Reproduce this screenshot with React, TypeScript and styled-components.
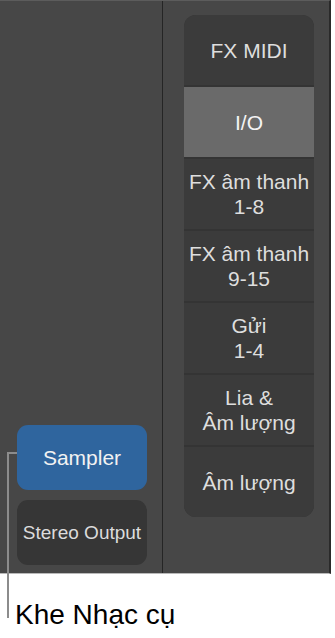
import React from "react";
import styled, { createGlobalStyle } from "styled-components";

const Global = createGlobalStyle`
  html, body { margin: 0; padding: 0; background: #ffffff; }
  body { font-family: "Liberation Sans", Arial, sans-serif; }
`;

const Page = styled.div`
  position: relative;
  width: 335px;
  height: 638px;
  background: #ffffff;
`;

const Panel = styled.div`
  display: flex;
  width: 329px;
  height: 572px;
  background: #474747;
  border-top: 1px solid #5c5c5c;
  border-bottom: 1px solid #b9b9b9;
  border-right: 2px solid #2a2a2a;
`;

const LeftColumn = styled.div`
  width: 163px;
  display: flex;
  flex-direction: column;
  justify-content: flex-end;
  align-items: flex-start;
  gap: 10px;
  padding: 0 0 8px 17px;
  box-sizing: border-box;
  border-right: 1px solid #252525;
`;

const Slot = styled.div<{ $active?: boolean; $size: number }>`
  width: 130px;
  height: 65px;
  border-radius: 11px;
  display: flex;
  align-items: center;
  justify-content: center;
  background: ${(p) => (p.$active ? "#2f659e" : "#363636")};
  color: ${(p) => (p.$active ? "#f2f2f2" : "#dcdcdc")};
  font-size: ${(p) => p.$size}px;
`;

const RightColumn = styled.div`
  flex: 1;
  padding: 14px 15px 0 21px;
`;

const Stack = styled.div`
  display: flex;
  flex-direction: column;
  gap: 2px;
  border-radius: 12px;
  overflow: hidden;
  background: #343434;
`;

const Cell = styled.div<{ $selected?: boolean }>`
  height: 70px;
  display: flex;
  align-items: center;
  justify-content: center;
  text-align: center;
  background: ${(p) => (p.$selected ? "#6a6a6a" : "#3b3b3b")};
  color: ${(p) => (p.$selected ? "#f4f4f4" : "#dedede")};
  font-size: 21px;
  line-height: 25px;
`;

const Caption = styled.div`
  padding: 25px 0 0 15px;
  font-size: 28px;
  color: #000000;
  line-height: 32px;
`;

const CalloutV = styled.div`
  position: absolute;
  left: 7px;
  top: 452px;
  width: 2px;
  height: 166px;
  background: #8c8c8c;
`;

const CalloutH = styled.div`
  position: absolute;
  left: 7px;
  top: 452px;
  width: 10px;
  height: 2px;
  background: #8c8c8c;
`;

const cells = [
  ["FX MIDI"],
  ["I/O"],
  ["FX âm thanh", "1-8"],
  ["FX âm thanh", "9-15"],
  ["Gửi", "1-4"],
  ["Lia &", "Âm lượng"],
  ["Âm lượng"],
];

export default function App() {
  return (
    <Page>
      <Global />
      <Panel>
        <LeftColumn>
          <Slot $active $size={21}>Sampler</Slot>
          <Slot $size={19}>Stereo Output</Slot>
        </LeftColumn>
        <RightColumn>
          <Stack>
            {cells.map((lines, i) => (
              <Cell key={i} $selected={i === 1}>
                <div>
                  {lines.map((l, j) => (
                    <div key={j}>{l}</div>
                  ))}
                </div>
              </Cell>
            ))}
          </Stack>
        </RightColumn>
      </Panel>
      <Caption>Khe Nhạc cụ</Caption>
      <CalloutV />
      <CalloutH />
    </Page>
  );
}
